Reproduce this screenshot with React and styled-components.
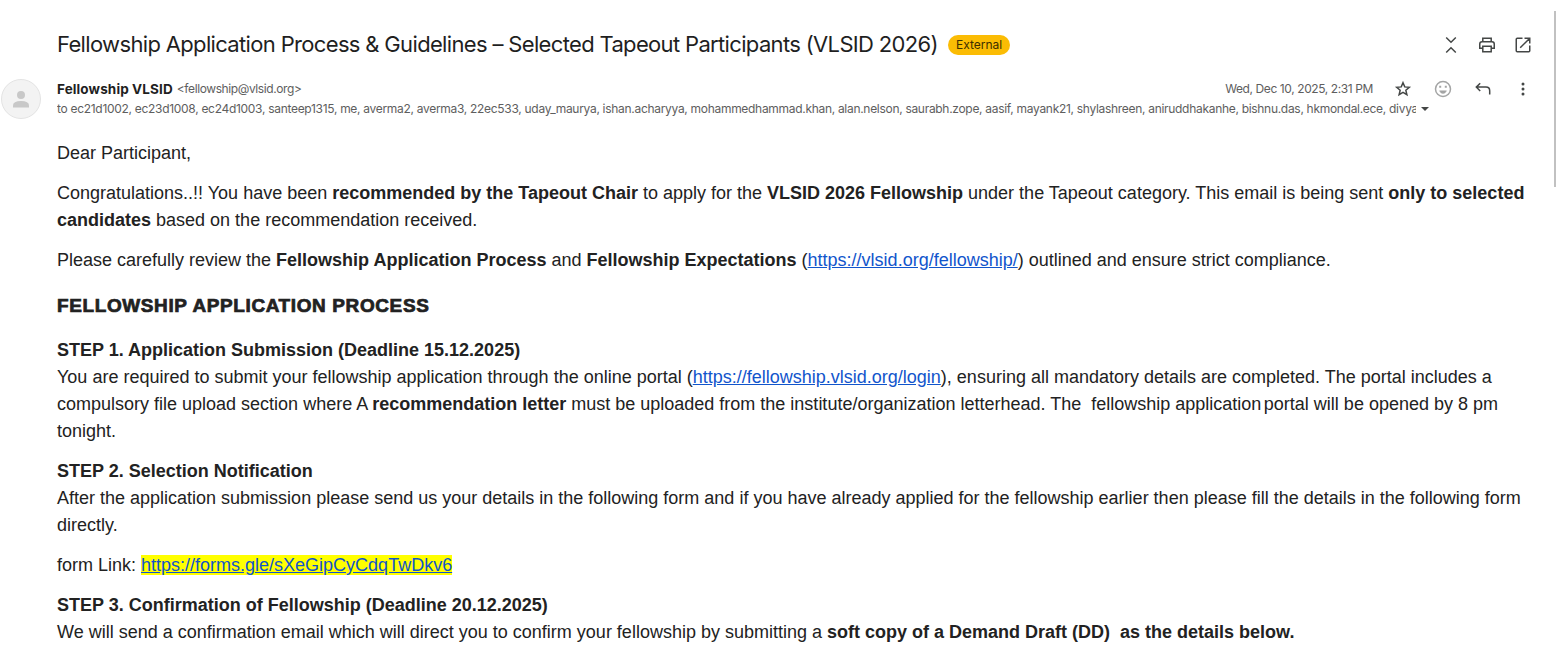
import React from 'react'
import styled, { createGlobalStyle } from 'styled-components'

const GlobalStyle = createGlobalStyle`
  body {
    margin: 0;
    background: #fff;
    overflow: hidden;
  }
`

const sans = '"Liberation Sans", Arial, sans-serif'
const ui = 'Inter, "Open Sans", sans-serif'

const Page = styled.div`
  display: flex;
  width: 1556px;
  height: 656px;
  overflow: hidden;
  color: #222;
  font-family: ${sans};
`

const Message = styled.main`
  flex: 1;
  min-width: 0;
  padding-top: 29px;
`

const SubjectRow = styled.header`
  display: flex;
  align-items: center;
  height: 32px;
  padding: 0 21px 0 57px;
`

const Subject = styled.h1`
  margin: 0;
  padding-bottom: 2px;
  color: #1f1f1f;
  font: 400 22px/28px ${ui};
  letter-spacing: -0.66px;
  white-space: nowrap;
`

const Label = styled.span`
  margin-left: 10px;
  padding: 0 8px;
  border-radius: 10px;
  background: #fbbc04;
  color: #3d2e00;
  font: 400 12px/20px ${ui};
`

const Actions = styled.div`
  display: flex;
  gap: ${props => props.$gap}px;
  margin-left: ${props => props.$push ? 'auto' : 0};
`

const Icon = styled.svg`
  display: block;
  width: 20px;
  height: 20px;
  fill: none;
  stroke: ${props => props.$color || '#444746'};
  stroke-width: 1.5;
`

const SenderRow = styled.section`
  display: flex;
  height: 60px;
  padding-top: 17px;
`

const Avatar = styled.svg`
  flex: none;
  width: 40px;
  height: 40px;
  margin: 1px 16px 0 1px;
`

const Details = styled.div`
  flex: 1;
  min-width: 0;
  padding: 1px 21px 0 0;
`

const DetailLine = styled.div`
  display: flex;
  align-items: center;
  height: 20px;
  color: #5e5e5e;
  font: 400 12px/20px ${ui};
  white-space: nowrap;
`

const Sender = styled.span`
  color: #1f1f1f;
  font-size: 13.5px;
  font-weight: 700;
  letter-spacing: 0.12px;
`

const Address = styled.span`
  margin-left: 4px;
  letter-spacing: -0.4px;
`

const SentAt = styled.span`
  margin-left: auto;
  margin-right: 20px;
  letter-spacing: -0.4px;
`

const Recipients = styled.span`
  width: 1359px;
  overflow: hidden;
  letter-spacing: -0.3px;
`

const Caret = styled.span`
  margin-left: 5px;
  border: 4px solid transparent;
  border-top-color: #444746;
  border-bottom: 0;
`

const Body = styled.article`
  padding: 2px 0 0 57px;
  font-size: 18px;
  line-height: 27px;
  white-space: nowrap;

  p {
    margin: 0 0 13px;
  }

  a {
    color: #1155cc;
  }
`

const Heading = styled.h2`
  width: max-content;
  margin: 0;
  padding: 6px 0 17px;
  font: 700 18px/27px ${sans};
  letter-spacing: 0.6px;
  transform: scaleX(1.053);
  transform-origin: left;
  -webkit-text-stroke: 0.7px #222;
`

const Line = styled.span`
  display: block;
  width: max-content;
`

const TightSpace = styled.span`
  letter-spacing: -2.5px;
`

const Marked = styled.a`
  background: #ff0;
`

const Scrollbar = styled.div`
  width: 2px;
  height: 176px;
  margin-top: 11px;
  background: #c1c1c1;
`

const recipients = [
  'ec21d1002', 'ec23d1008', 'ec24d1003', 'santeep1315', 'me', 'averma2', 'averma3',
  '22ec533', 'uday_maurya', 'ishan.acharyya', 'mohammedhammad.khan', 'alan.nelson',
  'saurabh.zope', 'aasif', 'mayank21', 'shylashreen', 'aniruddhakanhe', 'bishnu.das',
  'hkmondal.ece', 'divya'
]

const App = () => (
  <Page>
    <GlobalStyle />
    <Message>
      <SubjectRow>
        <Subject>Fellowship Application Process &amp; Guidelines – Selected Tapeout Participants (VLSID 2026)</Subject>
        <Label>External</Label>
        <Actions $gap={16} $push>
          <Icon viewBox='0 0 20 20'><path d='M5.2 2.500 10 7.200l4.800-4.700M5.200 17.500 10 12.800l4.800 4.700' /></Icon>
          <Icon viewBox='0 0 20 20'>
            <path d='M5.800 6.500V3.250h8.400V6.500M5.500 13.250H2.750V9Q2.750 6.750 5 6.750h10Q17.250 6.750 17.250 9v4.250H14.500M5.800 11.250h8.400v5.500H5.800z' />
          </Icon>
          <Icon viewBox='0 0 20 20'><path d='M9.500 3.250H4.250q-1 0-1 1v11.500q0 1 1 1h11.500q1 0 1-1V10.500M11.500 3.250h5.250v5.250M16.500 3.500 7.200 12.800' /></Icon>
        </Actions>
      </SubjectRow>
      <SenderRow>
        <Avatar viewBox='0 0 40 40'>
          <circle cx='20' cy='20' r='19.500' fill='#f3f3f3' stroke='#e3e3e3' />
          <circle cx='20' cy='16' r='4' fill='#c8c8c8' />
          <path d='M12 28.500v-2q0-4.500 8-4.500t8 4.500v2z' fill='#c8c8c8' />
        </Avatar>
        <Details>
          <DetailLine>
            <Sender>Fellowship VLSID</Sender>
            <Address>&lt;fellowship@vlsid.org&gt;</Address>
            <SentAt>Wed, Dec 10, 2025, 2:31 PM</SentAt>
            <Actions $gap={20}>
              <Icon viewBox='0 0 20 20'>
                <path d='m10 3.700 1.750 4.200 4.550.4-3.450 3 1.050 4.450L10 13.400l-3.900 2.350 1.050-4.450-3.450-3 4.550-.4z' />
              </Icon>
              <Icon viewBox='0 0 20 20' $color='#a4a5a5'>
                <circle cx='10' cy='10' r='7.500' />
                <path d='M6.500 11.800h7q-1 2.700-3.500 2.700t-3.500-2.700z' fill='#a4a5a5' strokeWidth='0.500' />
                <path d='M7.200 6.800v2M12.800 6.800v2' strokeWidth='2' />
              </Icon>
              <Icon viewBox='0 0 20 20'><path d='M7.200 4.200 3.300 8.100l3.900 3.900M3.300 8.100H13q3.700 0 3.700 3.700v3.700' /></Icon>
              <Icon viewBox='0 0 20 20' $color='none'>
                <g fill='#444746'>
                  <circle cx='10' cy='5' r='1.500' />
                  <circle cx='10' cy='10' r='1.500' />
                  <circle cx='10' cy='15' r='1.500' />
                </g>
              </Icon>
            </Actions>
          </DetailLine>
          <DetailLine>
            <Recipients>to {recipients.join(', ')}</Recipients>
            <Caret />
          </DetailLine>
        </Details>
      </SenderRow>
      <Body>
        <p><Line>Dear Participant,</Line></p>
        <p>
          <Line>Congratulations..!! You have been <b>recommended by the Tapeout Chair</b> to apply for the <b>VLSID 2026 Fellowship</b> under the Tapeout category. This email is being sent <b>only to selected</b></Line>
          <Line><b>candidates</b> based on the recommendation received.</Line>
        </p>
        <p>
          <Line>Please carefully review the <b>Fellowship Application Process</b> and <b>Fellowship Expectations</b> (<a href='#fellowship'>https://vlsid.org/fellowship/</a>) outlined and ensure strict compliance.</Line>
        </p>
        <Heading>FELLOWSHIP APPLICATION PROCESS</Heading>
        <p>
          <Line><b>STEP 1. Application Submission (Deadline 15.12.2025)</b></Line>
          <Line>You are required to submit your fellowship application through the online portal (<a href='#login'>https://fellowship.vlsid.org/login</a>), ensuring all mandatory details are completed. The portal includes a</Line>
          <Line>compulsory file upload section where A <b>recommendation letter</b> must be uploaded from the institute/organization letterhead. The&nbsp; fellowship application<TightSpace> </TightSpace>portal will be opened by 8 pm</Line>
          <Line>tonight.</Line>
        </p>
        <p>
          <Line><b>STEP 2. Selection Notification</b></Line>
          <Line>After the application submission please send us your details in the following form and if you have already applied for the fellowship earlier then please fill the details in the following form</Line>
          <Line>directly.</Line>
        </p>
        <p><Line>form Link: <Marked href='#form'>https://forms.gle/sXeGipCyCdqTwDkv6</Marked></Line></p>
        <p>
          <Line><b>STEP 3. Confirmation of Fellowship (Deadline 20.12.2025)</b></Line>
          <Line>We will send a confirmation email which will direct you to confirm your fellowship by submitting a <b>soft copy of a Demand Draft (DD)&nbsp; as the details below.</b></Line>
        </p>
      </Body>
    </Message>
    <Scrollbar />
  </Page>
)

export default App
